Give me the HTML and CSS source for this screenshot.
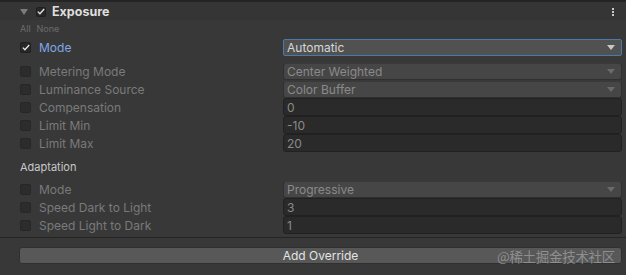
FILE: index.html
```
<!DOCTYPE html>
<html>
<head>
    <meta charset="utf-8">
    <title>Exposure</title>
    <link rel="stylesheet" href="styles.css">
</head>
<body>
<div class="panel">
    <div class="header">
        <span class="fold"></span>
        <span class="check on small">
            <svg width="8" height="7" viewBox="0 0 8 7"><polyline points="0.8,3.6 2.9,5.7 7.2,1" fill="none" stroke="#e6e6e6" stroke-width="1.3"/></svg>
        </span>
        <span class="title">Exposure</span>
        <span class="kebab"><i></i><i></i><i></i></span>
    </div>

    <div class="allnone"><span>All</span><span>None</span></div>

    <div class="row first">
        <span class="check on">
            <svg width="8" height="7" viewBox="0 0 8 7"><polyline points="0.8,3.6 2.9,5.7 7.2,1" fill="none" stroke="#e6e6e6" stroke-width="1.3"/></svg>
        </span>
        <span class="label active">Mode</span>
        <div class="field select focus">Automatic<span class="arrow"></span></div>
    </div>

    <div class="group">
        <div class="row">
            <span class="check"></span>
            <span class="label">Metering Mode</span>
            <div class="field select">Center Weighted<span class="arrow"></span></div>
        </div>
        <div class="row">
            <span class="check"></span>
            <span class="label">Luminance Source</span>
            <div class="field select">Color Buffer<span class="arrow"></span></div>
        </div>
        <div class="row">
            <span class="check"></span>
            <span class="label">Compensation</span>
            <div class="field text">0</div>
        </div>
        <div class="row">
            <span class="check"></span>
            <span class="label">Limit Min</span>
            <div class="field text">-10</div>
        </div>
        <div class="row">
            <span class="check"></span>
            <span class="label">Limit Max</span>
            <div class="field text">20</div>
        </div>
    </div>

    <div class="section">Adaptation</div>

    <div class="group">
        <div class="row">
            <span class="check"></span>
            <span class="label">Mode</span>
            <div class="field select">Progressive<span class="arrow"></span></div>
        </div>
        <div class="row">
            <span class="check"></span>
            <span class="label">Speed Dark to Light</span>
            <div class="field text">3</div>
        </div>
        <div class="row">
            <span class="check"></span>
            <span class="label">Speed Light to Dark</span>
            <div class="field text">1</div>
        </div>
    </div>

    <div class="footer">
        <button class="add">Add Override</button>
        <span class="watermark">@稀土掘金技术社区</span>
    </div>
</div>
</body>
</html>
```

FILE: styles.css
```
html, body {
    margin: 0;
    padding: 0;
    background: #383838;
}

.panel {
    width: 626px;
    height: 275px;
    font-family: Inter, "Noto Sans", sans-serif;
    font-size: 12px;
    color: #c4c4c4;
    display: flex;
    flex-direction: column;
    position: relative;
}

.header {
    height: 18px;
    border-top: 2px solid #242424;
    background: #353535;
    display: flex;
    align-items: center;
    padding-left: 20px;
    padding-right: 12px;
}

.fold {
    width: 0;
    height: 0;
    border-left: 4px solid transparent;
    border-right: 4px solid transparent;
    border-top: 6px solid #7c7c7c;
    margin-right: 8px;
    margin-top: 1px;
}

.title {
    font-weight: bold;
    font-size: 12.5px;
    color: #dedede;
    margin-left: 6px;
    flex: 1;
}

.kebab {
    display: flex;
    flex-direction: column;
    gap: 1px;
    margin-top: 1px;
}

.kebab i {
    width: 2px;
    height: 2px;
    background: #c8c8c8;
}

.check {
    width: 11px;
    height: 11px;
    box-sizing: border-box;
    background: #2c2c2c;
    border: 1px solid #272727;
    border-radius: 2px;
    display: flex;
    align-items: center;
    justify-content: center;
    flex: none;
}

.check.on {
    background: #272727;
    border-color: #1f1f1f;
}

.check.small {
    width: 10px;
    height: 10px;
    margin-top: 1px;
}

.allnone {
    height: 16px;
    display: flex;
    align-items: center;
    gap: 6px;
    padding-left: 20px;
    font-size: 9px;
    color: #6c6c6c;
}

.row {
    height: 18px;
    display: flex;
    align-items: center;
    padding-left: 20px;
    padding-right: 4px;
}

.row.first {
    margin-top: 2px;
    margin-bottom: 6px;
}

.label {
    margin-left: 8px;
    width: 244px;
    color: #7a7a7a;
}

.label.active {
    color: #7fa8e4;
}

.field {
    flex: 1;
    height: 17px;
    box-sizing: border-box;
    display: flex;
    align-items: center;
    padding-left: 3px;
    border-radius: 3px;
    color: #8a8a8a;
    position: relative;
}

.field.select {
    background: #464646;
    border: 1px solid #303030;
    border-top-color: #3a3a3a;
}

.field.select.focus {
    background: #515151;
    border: 1px solid #4a7aa8;
    color: #d6d6d6;
    border-radius: 2px;
}

.field.text {
    height: 18px;
    background: #2a2a2a;
    border: 1px solid #212121;
}

.arrow {
    margin-left: auto;
    margin-right: 6px;
    width: 0;
    height: 0;
    border-left: 4px solid transparent;
    border-right: 4px solid transparent;
    border-top: 5px solid #6a6a6a;
}

.focus .arrow {
    border-top-color: #c8c8c8;
}

.section {
    height: 28px;
    display: flex;
    align-items: center;
    padding-left: 20px;
    padding-top: 1px;
    box-sizing: border-box;
    font-size: 11px;
    color: #c8c8c8;
}

.footer {
    margin-top: 3px;
    border-top: 1px solid #242424;
    flex: 1;
    padding: 9px 4px 0 19px;
    position: relative;
}

.add {
    width: 100%;
    height: 17px;
    box-sizing: border-box;
    background: #585858;
    border: 1px solid #303030;
    border-radius: 3px;
    color: #e4e4e4;
    font-family: Inter, "Noto Sans", sans-serif;
    font-size: 12px;
    padding: 0;
}

.watermark {
    position: absolute;
    right: 11px;
    top: 8px;
    font-family: "Noto Sans CJK SC", sans-serif;
    font-size: 13.5px;
    color: rgba(190, 190, 190, 0.55);
    letter-spacing: -0.3px;
}
```
